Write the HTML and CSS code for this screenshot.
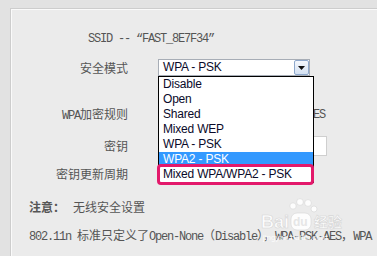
FILE: index.html
```html
<!DOCTYPE html>
<html lang="zh-CN">
<head>
    <meta charset="UTF-8">
    <title>无线安全设置</title>
    <link rel="stylesheet" href="styles.css">
</head>
<body>
    <div class="panel">
        <p class="ssid"><span class="en">SSID -- “FAST_8E7F34”</span></p>

        <div class="row row-mode">
            <span class="label">安全模式</span>
            <div class="select">
                <span class="select-value">WPA - PSK</span>
                <span class="select-arrow">
                    <svg width="7" height="4" viewBox="0 0 7 4"><path d="M0 0h7L3.5 4z" fill="#111"/></svg>
                </span>
                <ul class="options">
                    <li>Disable</li>
                    <li>Open</li>
                    <li>Shared</li>
                    <li>Mixed WEP</li>
                    <li>WPA - PSK</li>
                    <li class="active">WPA2 - PSK</li>
                    <li class="marked">Mixed WPA/WPA2 - PSK</li>
                </ul>
            </div>
        </div>

        <div class="row row-cipher">
            <span class="label"><span class="en">WPA</span>加密规则</span>
            <span class="cipher en">AES</span>
        </div>

        <div class="row row-key">
            <span class="label">密钥</span>
            <span class="input"></span>
        </div>

        <div class="row row-period">
            <span class="label">密钥更新周期</span>
            <span></span>
        </div>

        <p class="note"><b>注意：</b>无线安全设置</p>
        <p class="desc"><span class="en">802.11n </span>标准只定义了<span class="en">Open-None</span>（<span class="en">Disable</span>），<span class="en">WPA-PSK-AES</span>，<span class="en">WPA</span></p>
    </div>

    <!-- watermark -->
    <div class="watermark">
        <svg width="95" height="50" viewBox="0 0 95 50">
            <g fill="#fff" stroke="#d4d4d4" stroke-width="0.6" opacity="0.9">
                <circle cx="35" cy="11" r="3.2"/>
                <circle cx="42" cy="7" r="3.4"/>
                <circle cx="50" cy="8" r="3.4"/>
                <circle cx="56" cy="14" r="3"/>
                <rect x="33" y="18" width="20" height="17" rx="6"/>
                <text x="3" y="33" font-family="Liberation Sans, sans-serif" font-size="18" font-weight="bold">Bai</text>
                <text x="56" y="32" font-family="Noto Sans CJK SC, sans-serif" font-size="14" font-weight="bold">经验</text>
                <text x="5" y="45" font-family="Liberation Sans, sans-serif" font-size="8" stroke="none">jingyan.baidu.com</text>
            </g>
            <text x="35" y="31" fill="#e6e6e6" font-family="Liberation Sans, sans-serif" font-size="12" font-weight="bold">du</text>
        </svg>
    </div>
</body>
</html>
```

FILE: styles.css
```css
body {
    margin: 0;
    padding: 8px 0 0 10px;
    background-color: #e2e2e2;
    font-family: "Noto Sans CJK SC", sans-serif;
    font-size: 12px;
    color: #555;
    position: relative;
    height: 248px;
    overflow: hidden;
}
.panel {
    height: 100%;
    background-color: #ebebeb;
    border-top: 1px solid #cdcdcd;
    border-left: 1px solid #cdcdcd;
    box-shadow: inset 1px 1px 0 #fafafa;
}
p {
    margin: 0;
}
.en {
    font-family: "Liberation Mono", monospace;
    letter-spacing: -1.2px;
}
.ssid {
    margin: 21px 0 0 77px;
    line-height: 14px;
}
.row {
    display: grid;
    grid-template-columns: 117px 1fr;
    column-gap: 30px;
    align-items: center;
    height: 20px;
}
.label {
    text-align: right;
    line-height: 14px;
}
.row-mode {
    margin-top: 12px;
}
.row-cipher {
    margin-top: 27px;
}
.row-key {
    margin-top: 11px;
}
.row-period {
    margin-top: 8px;
}

/* select with open list */
.select {
    position: relative;
    align-self: start;
    margin-top: 1px;
    width: 152px;
    height: 17px;
    box-sizing: border-box;
    border: 1px solid #a7adb6;
    background-color: #fff;
    font-family: "Liberation Sans", Arial, sans-serif;
    color: #0a0a2a;
    letter-spacing: -0.2px;
}
.select-value {
    display: block;
    padding-left: 4px;
    line-height: 15px;
}
.select-arrow {
    position: absolute;
    top: 0;
    right: 0;
    width: 15px;
    height: 15px;
    box-sizing: border-box;
    border: 1px solid #8ea8cc;
    border-radius: 2px;
    background: linear-gradient(#f4f7fc, #d4e1f2);
    display: flex;
    align-items: center;
    justify-content: center;
}
.options {
    position: absolute;
    top: 16px;
    left: -1px;
    width: 156px;
    box-sizing: border-box;
    margin: 0;
    padding: 0;
    list-style: none;
    border: 1px solid #000;
    background-color: #fff;
    z-index: 2;
}
.options li {
    height: 15px;
    line-height: 15px;
    padding-left: 4px;
}
.options .active {
    background-color: #3399ff;
    color: #fff;
}
.options .marked {
    position: relative;
    height: 15px;
    margin: -3px -1px -3px -2px;
    padding-left: 3px;
    border: 3px solid #e3196b;
    border-radius: 4px;
    background-color: #fff;
    color: #0a0a2a;
}

.cipher {
    padding-left: 149px;
}
.input {
    display: block;
    width: 169px;
    height: 20px;
    box-sizing: border-box;
    border: 1px solid #cfcfcf;
    background-color: #fff;
}

.note {
    margin: 15px 0 0 18px;
    line-height: 16px;
}
.note b {
    margin-right: 8px;
}
.desc {
    margin: 12px 0 0 18px;
    line-height: 16px;
    white-space: nowrap;
    overflow: hidden;
}

.watermark {
    position: absolute;
    left: 258px;
    top: 195px;
    z-index: 3;
}
```
